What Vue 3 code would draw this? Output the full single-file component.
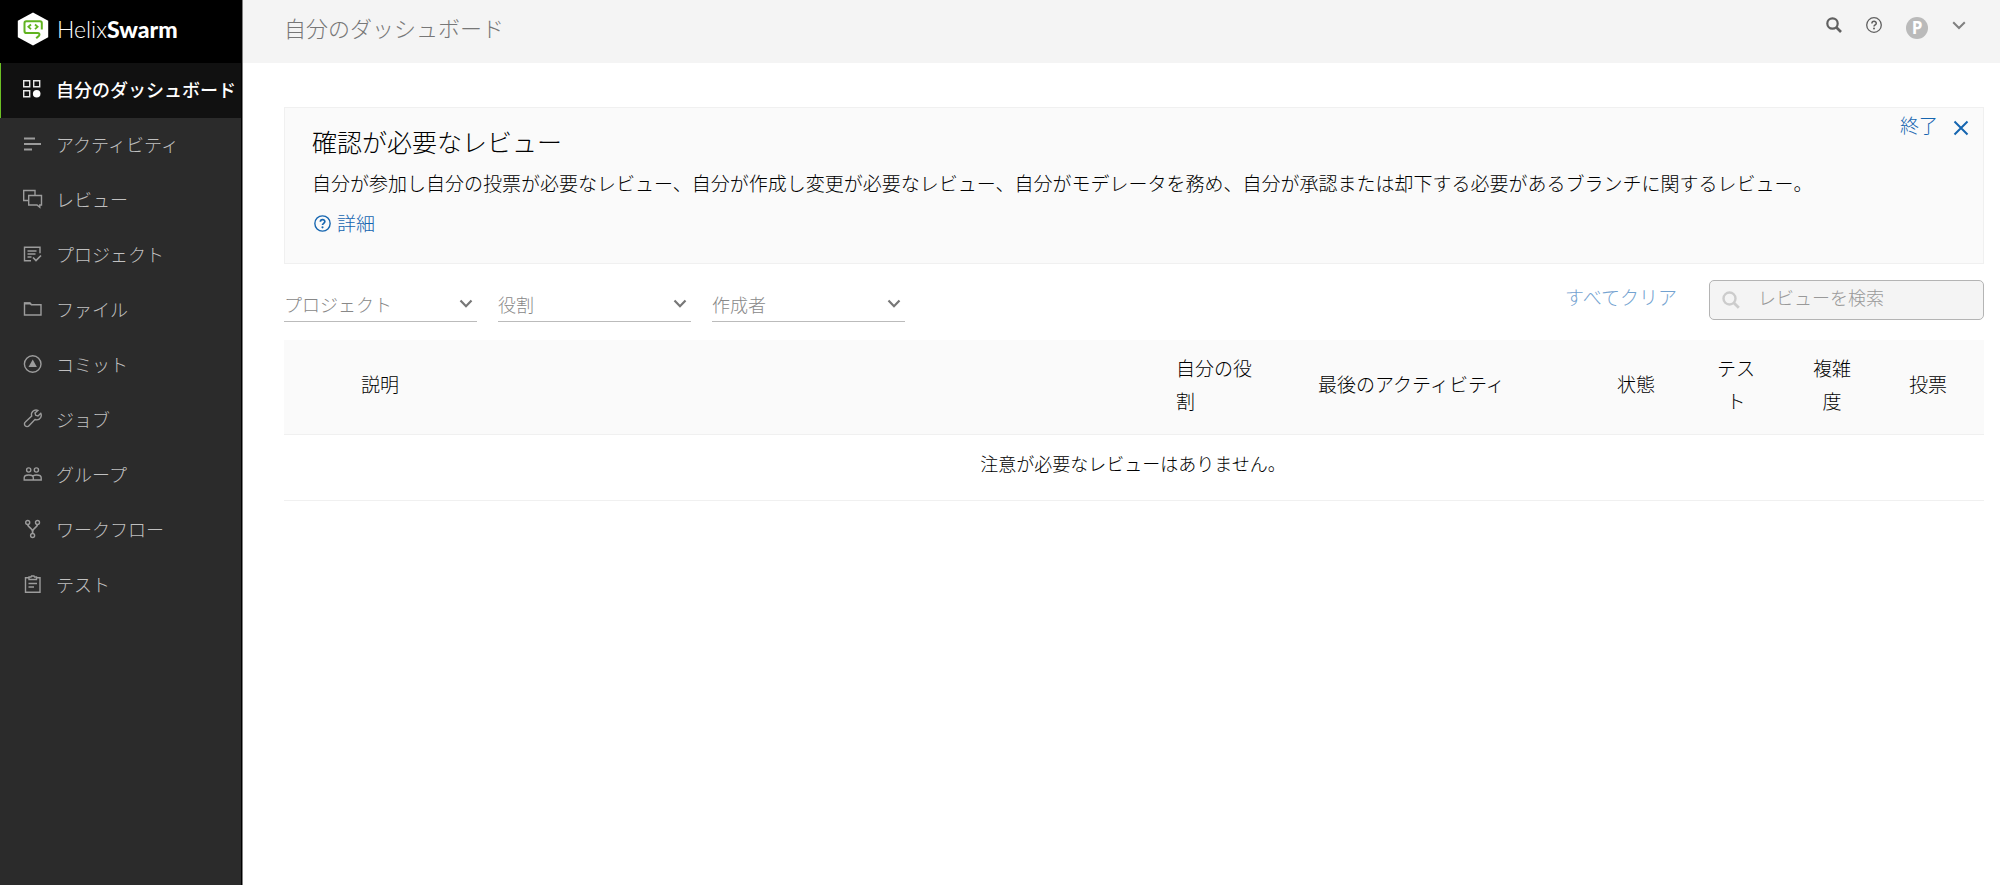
<script setup>
import { ref } from 'vue'

const active = ref('dashboard')
const nav = [
  { id: 'dashboard', label: '自分のダッシュボード' },
  { id: 'activity', label: 'アクティビティ' },
  { id: 'reviews', label: 'レビュー' },
  { id: 'projects', label: 'プロジェクト' },
  { id: 'files', label: 'ファイル' },
  { id: 'commits', label: 'コミット' },
  { id: 'jobs', label: 'ジョブ' },
  { id: 'groups', label: 'グループ' },
  { id: 'workflows', label: 'ワークフロー' },
  { id: 'tests', label: 'テスト' },
]
const filters = ['プロジェクト', '役割', '作成者']
const query = ref('')
</script>

<template>
  <div class="app">
    <aside class="sidebar">
      <a class="brand" href="#">
        <svg class="brand-mark" viewBox="0 0 32 34" aria-hidden="true">
          <path d="M16 .5 31.2 8.8v16.4L16 33.5.8 25.2V8.8z" fill="#fff" />
          <path d="M24.800 17.500V11c0-1-.8-1.800-1.800-1.800H9.300c-1 0-1.800.8-1.800 1.800v8.200c0 1 .8 1.800 1.800 1.800h11.200c2 0 2.500 1.500 1.500 2.700l-2.800 2.600" fill="none" stroke="#61b321" stroke-width="2" />
          <path d="m14 12.500-2.600 2.300 2.600 2.300M18 12.500l2.600 2.300-2.600 2.300" fill="none" stroke="#61b321" stroke-width="1.800" />
        </svg>
        <span class="brand-name">Helix<b>Swarm</b></span>
      </a>
      <nav>
        <a
          v-for="item in nav"
          :key="item.id"
          href="#"
          class="nav-item"
          :class="{ active: item.id === active }"
          @click.prevent="active = item.id"
        >
          <svg class="nav-icon" viewBox="0 0 20 20" aria-hidden="true">
            <template v-if="item.id === 'dashboard'">
              <path d="M.7 1.700h6v6h-6zM10.700 1.700h6v6h-6zM.7 11.700h6v6h-6z" />
              <circle class="solid" cx="13.700" cy="14.700" r="3.800" />
            </template>
            <path v-else-if="item.id === 'activity'" stroke-width="2" d="M1 4.500h11M1 10h17M1 15.500h8" />
            <template v-else-if="item.id === 'reviews'">
              <path d="M5 11.500H.7v-10h11.300V6" />
              <path d="M5.700 6.500h12.800v9.500h-1.700v2.300L14 16H5.700z" />
            </template>
            <template v-else-if="item.id === 'projects'">
              <path d="M8 16.700H1.500V3.300h15.500v6M4.500 7h9M4.500 10h8M4.500 13h4" />
              <path stroke-width="1.700" d="m10 13.500 3 3 5-5" />
            </template>
            <template v-else-if="item.id === 'files'">
              <path d="M1.500 16V4h5.300l1.500 1.700h9.700V16z" />
              <path class="solid" d="M1 3.500h6.500l1.500 2H1z" />
            </template>
            <template v-else-if="item.id === 'commits'">
              <circle cx="9.700" cy="10" r="8.300" />
              <path class="solid" d="m9.700 5.500 4.200 7.500H5.500z" />
            </template>
            <path v-else-if="item.id === 'jobs'" d="M17.800 4.300 15 7l-2.300-.7-.7-2.300 2.800-2.600c-2.500-.9-5.200.2-6.100 2.600-.4 1-.3 2 0 3L2.400 13c-1.200 1-1.200 2.700-.2 3.800 1.100 1.100 2.800 1.100 3.800 0l5.900-6.300c2.100.8 4.500 0 5.700-1.900.8-1.400.9-2.900.2-4.300z" />
            <template v-else-if="item.id === 'groups'">
              <circle cx="5.700" cy="6" r="2.100" />
              <circle cx="13.400" cy="6" r="2.100" />
              <path d="M1.200 16v-2.300c0-1.700 2-2.700 4.500-2.700s4.600 1 4.600 2.700V16zM10.300 16h7.900v-2.300c0-1.700-2-2.700-4.600-2.700-1.600 0-3 .4-3.800 1.200" />
            </template>
            <template v-else-if="item.id === 'workflows'">
              <circle cx="4.700" cy="3.500" r="2" />
              <circle cx="14.500" cy="3.500" r="2" />
              <circle cx="9.600" cy="16.500" r="2" />
              <path stroke-width="1.700" d="M4.700 5.500c.3 3 4.900 4 4.900 7v2M14.500 5.500c-.3 3-4.900 4-4.900 7" />
            </template>
            <template v-else>
              <path d="M6 3.700H2.500v14.500H17V3.700H13.500M5.500 9.500H14M5.500 13H11" />
              <path d="M6 5.500V3h2l.5-1H11l.5 1h2v2.500z" />
            </template>
          </svg>
          <span>{{ item.label }}</span>
        </a>
      </nav>
    </aside>

    <div class="page">
      <header class="topbar">
        <h1>自分のダッシュボード</h1>
        <div class="tools">
          <button type="button" aria-label="検索">
            <svg width="16" height="16" viewBox="0 0 16 16" aria-hidden="true">
              <circle cx="6.500" cy="6.500" r="5.200" fill="none" stroke="#606060" stroke-width="2.200" />
              <path d="m10.500 10.500 4.500 4.500" stroke="#606060" stroke-width="2.600" />
            </svg>
          </button>
          <button type="button" aria-label="ヘルプ">
            <svg width="16" height="16" viewBox="0 0 16 16" aria-hidden="true">
              <circle cx="8" cy="8" r="7.300" fill="none" stroke="#606060" stroke-width="1.300" />
              <path d="M5.900 6.500c0-2.900 4.400-2.800 4.400-.2C10.300 7.900 8 7.900 8 9.600" fill="none" stroke="#606060" stroke-width="1.500" />
              <circle cx="8" cy="11.600" r="1" fill="#606060" />
            </svg>
          </button>
          <button type="button" class="avatar" aria-label="プロフィール">P</button>
          <button type="button" aria-label="メニュー">
            <svg width="14" height="9" viewBox="0 0 14 9" aria-hidden="true">
              <path d="m1.200 1.200 5.800 5.800 5.800-5.800" fill="none" stroke="#808080" stroke-width="2" />
            </svg>
          </button>
        </div>
      </header>

      <main>
        <section class="notice">
          <div class="notice-text">
            <h2>確認が必要なレビュー</h2>
            <p>自分が参加し自分の投票が必要なレビュー、自分が作成し変更が必要なレビュー、自分がモデレータを務め、自分が承認または却下する必要があるブランチに関するレビュー。</p>
            <a class="more" href="#">
              <svg width="17" height="17" viewBox="0 0 16 16" aria-hidden="true">
                <circle cx="8" cy="8" r="7.200" fill="none" stroke="#1565b0" stroke-width="1.300" />
                <path d="M6 6.400c0-2.800 4.200-2.700 4.200-.2C10.200 7.800 8 7.900 8 9.500" fill="none" stroke="#1565b0" stroke-width="1.600" />
                <circle cx="8" cy="11.600" r="1" fill="#1565b0" />
              </svg>
              詳細
            </a>
          </div>
          <button type="button" class="dismiss">
            <span>終了</span>
            <svg width="16" height="16" viewBox="0 0 16 16" aria-hidden="true">
              <path d="m1.500 1.500 13 13M14.500 1.500l-13 13" stroke="#1565b0" stroke-width="2" />
            </svg>
          </button>
        </section>

        <div class="toolbar">
          <label v-for="name in filters" :key="name" class="filter">
            <select :aria-label="name">
              <option>{{ name }}</option>
            </select>
            <svg width="14" height="10" viewBox="0 0 14 10" aria-hidden="true">
              <path d="m1.500 1.500 5.500 5.700 5.500-5.700" fill="none" stroke="#777" stroke-width="2.200" />
            </svg>
          </label>
          <button type="button" class="clear">すべてクリア</button>
          <label class="search">
            <svg width="18" height="18" viewBox="0 0 18 18" aria-hidden="true">
              <circle cx="7.500" cy="7.500" r="6" fill="none" stroke="#ccc" stroke-width="2.400" />
              <path d="m12 12 4.800 4.800" stroke="#ccc" stroke-width="2.800" />
            </svg>
            <input v-model="query" type="text" placeholder="レビューを検索" aria-label="レビューを検索" />
          </label>
        </div>

        <table>
          <thead>
            <tr>
              <th class="c-desc">説明</th>
              <th class="c-role">自分の役割</th>
              <th class="c-last">最後のアクティビティ</th>
              <th class="c-state">状態</th>
              <th class="c-num">テスト</th>
              <th class="c-num">複雑度</th>
              <th class="c-vote">投票</th>
            </tr>
          </thead>
          <tbody>
            <tr>
              <td colspan="7">注意が必要なレビューはありません。</td>
            </tr>
          </tbody>
        </table>
      </main>
    </div>
  </div>
</template>

<style>
body {
  background: #fff;
}
</style>

<style scoped>
.app {
  display: flex;
  min-height: 100vh;
  font-family: 'Noto Sans CJK JP', sans-serif;
  font-weight: 300;
  color: #000;
}
.app *,
.app {
  box-sizing: border-box;
}
h1,
h2,
p {
  margin: 0;
  font-weight: 300;
}
a {
  text-decoration: none;
}
button,
select,
input {
  font: inherit;
  color: inherit;
  background: none;
  border: 0;
  padding: 0;
  margin: 0;
  outline: 0;
}
button {
  cursor: pointer;
}
svg {
  display: block;
  flex: none;
}

.sidebar {
  flex: none;
  width: 243px;
  background: #2b2b2b;
  border-right: 1px solid #808080;
  box-shadow: inset -1px 0 #000;
}
.brand {
  display: flex;
  align-items: center;
  gap: 8px;
  height: 63px;
  padding: 0 0 6px 17px;
  background: #000;
  color: #fff;
  font: 300 23px/32px Lato, sans-serif;
}
.brand-mark {
  width: 32px;
  height: 34px;
}
.brand-name b {
  font-weight: 900;
}
.nav-item {
  display: flex;
  align-items: center;
  gap: 13px;
  height: 55px;
  margin-right: 1px;
  padding: 0 0 4px 22px;
  border-left: 1px solid transparent;
  color: #c0c0c0;
  font-size: 18px;
  white-space: nowrap;
}
.nav-item.active {
  background: #111;
  border-left-color: #6cc024;
  color: #fff;
  font-weight: 500;
}
.nav-icon {
  width: 20px;
  height: 20px;
  fill: none;
  stroke: #9c9c9c;
  stroke-width: 1.4;
}
.nav-icon .solid {
  fill: #9c9c9c;
  stroke: none;
}
.active .nav-icon {
  stroke: #e6e6e6;
}
.active .nav-icon .solid {
  fill: #fff;
}

.page {
  flex: 1;
  min-width: 0;
}
.topbar {
  display: flex;
  justify-content: space-between;
  height: 63px;
  padding: 0 34px 0 41px;
  background: #f4f4f4;
}
.topbar h1 {
  font-size: 22px;
  line-height: 54px;
  color: #777;
}
.tools {
  display: flex;
  align-items: center;
  gap: 24px;
  height: 50px;
}
.avatar {
  width: 22px;
  height: 22px;
  margin-top: 6px;
  border-radius: 50%;
  background: #bababa;
  color: #fff;
  font: 700 17px/20px 'Open Sans', sans-serif;
}

main {
  padding: 44px 16px 0 41px;
}
.notice {
  display: flex;
  justify-content: space-between;
  align-items: flex-start;
  height: 157px;
  padding: 0 14px 0 27px;
  background: #fafafa;
  border: 1px solid #f0f0f0;
}
.notice-text {
  flex: 1;
  padding-top: 14px;
}
.notice h2 {
  font-size: 25px;
  line-height: 38px;
}
.notice p {
  padding-top: 2px;
  font-size: 19px;
  line-height: 42px;
}
.more {
  display: flex;
  align-items: center;
  gap: 6px;
  padding-left: 2px;
  color: #1565b0;
  font-size: 19px;
  line-height: 38px;
}
.dismiss {
  display: flex;
  align-items: center;
  gap: 15px;
  color: #1565b0;
  font-size: 19px;
  line-height: 34px;
  white-space: nowrap;
}
.dismiss svg {
  margin-top: 6px;
}

.toolbar {
  display: flex;
  align-items: flex-start;
  gap: 21px;
  height: 76px;
  padding-top: 16px;
}
.filter {
  display: flex;
  align-items: center;
  width: 193px;
  height: 42px;
  padding-top: 6px;
  border-bottom: 1px solid #bbb;
}
.filter select {
  flex: 1;
  min-width: 0;
  height: 36px;
  appearance: none;
  font-size: 18px;
  color: #888;
}
.filter svg {
  margin-right: 4px;
}
.clear {
  margin-left: auto;
  margin-right: 11px;
  color: #73a2d0;
  font-size: 19px;
  line-height: 34px;
}
.search {
  display: flex;
  align-items: center;
  gap: 18px;
  width: 275px;
  height: 40px;
  padding-left: 12px;
  background: #f4f4f4;
  border: 1px solid #b4b4b4;
  border-radius: 5px;
}
.search input {
  flex: 1;
  min-width: 0;
  height: 38px;
  padding-bottom: 6px;
  font-size: 18px;
}
.search input::placeholder {
  color: #999;
  opacity: 1;
}

table {
  width: 100%;
  table-layout: fixed;
  border-collapse: collapse;
}
th {
  height: 94px;
  padding: 0 24px 6px;
  background: #fafafa;
  border-bottom: 1px solid #f0f0f0;
  font-size: 19px;
  font-weight: 300;
  line-height: 33px;
  text-align: center;
}
.c-desc,
.c-role,
.c-last {
  text-align: left;
}
.c-desc {
  padding-left: 77px;
}
.c-role {
  width: 142px;
  padding-left: 16px;
  padding-right: 40px;
}
.c-last {
  width: 282px;
  padding-left: 16px;
}
.c-state {
  width: 104px;
}
.c-num {
  width: 96px;
}
.c-vote {
  width: 104px;
  padding-right: 32px;
}
td {
  height: 66px;
  padding: 0 2px 8px 0;
  border-bottom: 1px solid #f0f0f0;
  font-size: 18px;
  text-align: center;
}
</style>
